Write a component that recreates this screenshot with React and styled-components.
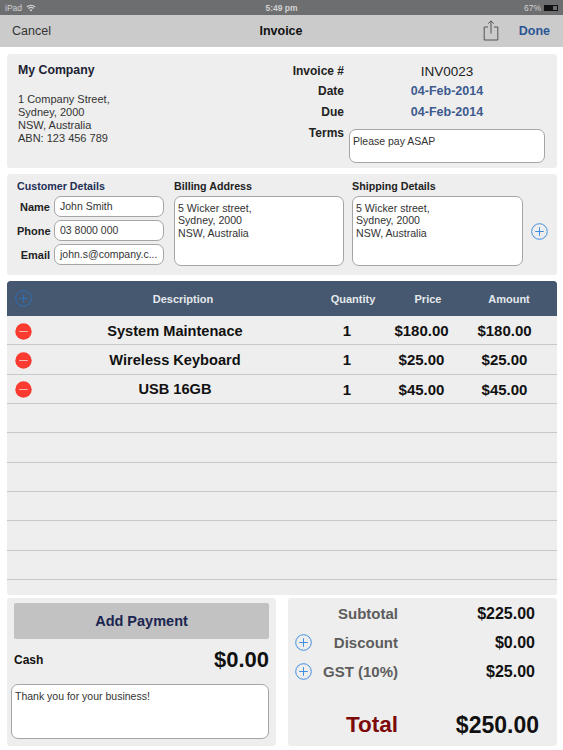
import React from 'react';
import styled, { createGlobalStyle } from 'styled-components';

const items = [
  { name: 'System Maintenace', qty: '1', price: '$180.00', amount: '$180.00' },
  { name: 'Wireless Keyboard', qty: '1', price: '$25.00', amount: '$25.00' },
  { name: 'USB 16GB', qty: '1', price: '$45.00', amount: '$45.00' },
];

function PlusIcon({ size = 17, color = '#3f8fe0' }) {
  return (
    <svg width={size} height={size} viewBox="0 0 17 17" fill="none" stroke={color} strokeWidth="1">
      <circle cx="8.5" cy="8.5" r="7.8" />
      <path d="M8.5 4.2v8.6M4.2 8.5h8.6" />
    </svg>
  );
}

function MinusIcon() {
  return (
    <MinusSvg width="17" height="17" viewBox="0 0 17 17">
      <circle cx="8.5" cy="8.5" r="8.2" fill="#fb3b30" />
      <path d="M4.2 8.5h8.6" stroke="#f8b8b4" strokeWidth="1.2" />
    </MinusSvg>
  );
}

export default function App() {
  const emptyRows = Array.from({ length: 6 });

  return (
    <Page>
      <GlobalStyle />

      <StatusBar>
        <StatusLeft>
          iPad
          <svg width="10" height="8" viewBox="0 0 10 8" fill="#d0d0d0">
            <path d="M5 7.6L3.6 6a2 2 0 0 1 2.8 0zM2.8 5.1l-.8-.9a4.4 4.4 0 0 1 6 0l-.8.9a3.2 3.2 0 0 0-4.4 0zM1.3 3.5L.4 2.6a6.8 6.8 0 0 1 9.2 0l-.9.9a5.5 5.5 0 0 0-7.4 0z" />
          </svg>
        </StatusLeft>
        <StatusCenter>5:49 pm</StatusCenter>
        <StatusRight>
          67%
          <Battery>
            <BatteryFill />
          </Battery>
        </StatusRight>
      </StatusBar>

      <NavBar>
        <NavCancel>Cancel</NavCancel>
        <NavTitle>Invoice</NavTitle>
        <NavActions>
          <ShareSvg width="16" height="21" viewBox="0 0 16 21" fill="none" stroke="#555" strokeWidth="1">
            <path d="M5 7H1.2v13h13.6V7H11" />
            <path d="M8 13.5V1M5.2 3.6L8 .9l2.8 2.7" />
          </ShareSvg>
          <NavDone>Done</NavDone>
        </NavActions>
      </NavBar>

      <Content>
        <CompanyCard>
          <CompanyInfo>
            <CompanyName>My Company</CompanyName>
            <Address>
              1 Company Street,
              <br />
              Sydney, 2000
              <br />
              NSW, Australia
              <br />
              ABN: 123 456 789
            </Address>
          </CompanyInfo>
          <InvoiceMeta>
            <MetaLabel $h={19}>Invoice #</MetaLabel>
            <InvoiceNumber>INV0023</InvoiceNumber>
            <MetaLabel $h={20}>Date</MetaLabel>
            <DateValue $h={20}>04-Feb-2014</DateValue>
            <MetaLabel $h={23}>Due</MetaLabel>
            <DateValue $h={23}>04-Feb-2014</DateValue>
            <MetaLabel $h={19}>Terms</MetaLabel>
            <TermsBox>Please pay ASAP</TermsBox>
          </InvoiceMeta>
        </CompanyCard>

        <CustomerCard>
          <CustomerColumn>
            <CustomerHeading>Customer Details</CustomerHeading>
            <FieldRow>
              <FieldLabel>Name</FieldLabel>
              <FieldInput>John Smith</FieldInput>
            </FieldRow>
            <FieldRow>
              <FieldLabel>Phone</FieldLabel>
              <FieldInput>03 8000 000</FieldInput>
            </FieldRow>
            <FieldRow>
              <FieldLabel>Email</FieldLabel>
              <FieldInput>john.s@company.c...</FieldInput>
            </FieldRow>
          </CustomerColumn>
          <AddressColumn $w={170}>
            <AddressHeading>Billing Address</AddressHeading>
            <AddressBox>
              5 Wicker street,
              <br />
              Sydney, 2000
              <br />
              NSW, Australia
            </AddressBox>
          </AddressColumn>
          <AddressColumn $w={171}>
            <AddressHeading>Shipping Details</AddressHeading>
            <AddressBox>
              5 Wicker street,
              <br />
              Sydney, 2000
              <br />
              NSW, Australia
            </AddressBox>
          </AddressColumn>
          <AddCustomer>
            <PlusIcon />
          </AddCustomer>
        </CustomerCard>

        <ItemsTable>
          <HeaderRow>
            <IconCell>
              <PlusIcon color="#2f6fb5" />
            </IconCell>
            <HeaderCell>Description</HeaderCell>
            <HeaderCell>Quantity</HeaderCell>
            <HeaderCell>Price</HeaderCell>
            <HeaderCell>Amount</HeaderCell>
          </HeaderRow>
          {items.map((item) => (
            <ItemRow key={item.name}>
              <IconCell>
                <MinusIcon />
              </IconCell>
              <ItemCell>{item.name}</ItemCell>
              <PriceCell>{item.qty}</PriceCell>
              <PriceCell>{item.price}</PriceCell>
              <PriceCell>{item.amount}</PriceCell>
            </ItemRow>
          ))}
          {emptyRows.map((_, i) => (
            <ItemRow key={i} />
          ))}
        </ItemsTable>

        <BottomRow>
          <PaymentCard>
            <AddPayment>Add Payment</AddPayment>
            <CashRow>
              <CashLabel>Cash</CashLabel>
              <CashValue>$0.00</CashValue>
            </CashRow>
            <NotesBox>Thank you for your business!</NotesBox>
          </PaymentCard>
          <TotalsCard>
            <TotalLine>
              <span />
              <TotalLabel>Subtotal</TotalLabel>
              <TotalValue>$225.00</TotalValue>
            </TotalLine>
            <TotalLine>
              <PlusIcon />
              <TotalLabel>Discount</TotalLabel>
              <TotalValue>$0.00</TotalValue>
            </TotalLine>
            <TotalLine>
              <PlusIcon />
              <TotalLabel>GST (10%)</TotalLabel>
              <TotalValue>$25.00</TotalValue>
            </TotalLine>
            <GrandTotal>
              <span />
              <GrandLabel>Total</GrandLabel>
              <GrandValue>$250.00</GrandValue>
            </GrandTotal>
          </TotalsCard>
        </BottomRow>
      </Content>
    </Page>
  );
}

const GlobalStyle = createGlobalStyle`
  html, body {
    margin: 0;
    padding: 0;
    background: #fff;
  }
  body {
    font-family: "Liberation Sans", Arial, sans-serif;
    -webkit-font-smoothing: antialiased;
  }
`;

const Page = styled.div`
  width: 563px;
  height: 750px;
  overflow: hidden;
  background: #fff;
`;

const StatusBar = styled.div`
  height: 15px;
  background: #6d6e70;
  display: grid;
  grid-template-columns: 1fr auto 1fr;
  align-items: center;
  padding: 0 5px;
  font-size: 8.5px;
  color: #d2d2d2;
`;

const StatusLeft = styled.div`
  display: flex;
  align-items: center;
  gap: 4px;
`;

const StatusCenter = styled.div`
  font-weight: bold;
`;

const StatusRight = styled.div`
  display: flex;
  align-items: center;
  justify-content: flex-end;
  gap: 3px;
`;

const Battery = styled.div`
  width: 14px;
  height: 6px;
  border: 1px solid #111;
  box-sizing: border-box;
  box-shadow: 1px 0 0 -1px #111;
`;

const BatteryFill = styled.div`
  width: 67%;
  height: 100%;
  background: #111;
`;

const NavBar = styled.div`
  height: 32px;
  background: #cbcbcb;
  display: grid;
  grid-template-columns: 1fr auto 1fr;
  align-items: center;
  padding: 0 13px 0 12px;
`;

const NavCancel = styled.div`
  font-size: 12.5px;
  color: #333;
`;

const NavTitle = styled.div`
  font-size: 12.5px;
  font-weight: bold;
  color: #111;
`;

const NavActions = styled.div`
  display: flex;
  align-items: center;
  justify-content: flex-end;
  gap: 20px;
`;

const ShareSvg = styled.svg`
  margin-bottom: 2px;
`;

const NavDone = styled.div`
  font-size: 12.5px;
  font-weight: bold;
  color: #2c5596;
`;

const Content = styled.div`
  padding: 7px 6px 0 7px;
  display: flex;
  flex-direction: column;
`;

const Card = styled.div`
  background: #eeeeee;
  border-radius: 3px;
`;

const CompanyCard = styled(Card)`
  height: 114px;
  display: flex;
  justify-content: space-between;
`;

const CompanyInfo = styled.div`
  padding: 9px 0 0 11px;
`;

const CompanyName = styled.div`
  font-size: 12.3px;
  font-weight: bold;
  line-height: 15px;
  color: #1b2233;
`;

const Address = styled.div`
  margin-top: 15px;
  font-size: 11px;
  line-height: 13px;
  color: #333;
`;

const InvoiceMeta = styled.div`
  display: grid;
  grid-template-columns: 60px 196px;
  column-gap: 5px;
  align-content: start;
  padding: 8px 12px 0 0;
`;

const MetaLabel = styled.div`
  height: ${(p) => p.$h}px;
  line-height: ${(p) => p.$h}px;
  font-size: 12px;
  font-weight: bold;
  color: #222;
  text-align: right;
  white-space: nowrap;
`;

const InvoiceNumber = styled.div`
  height: 19px;
  line-height: 19px;
  font-size: 13.5px;
  color: #222;
  text-align: center;
`;

const DateValue = styled.div`
  height: ${(p) => p.$h}px;
  line-height: ${(p) => p.$h}px;
  font-size: 12.5px;
  font-weight: bold;
  color: #3d5a8e;
  text-align: center;
`;

const Box = styled.div`
  background: #fff;
  border: 1px solid #a5a5a5;
  border-radius: 7px;
  box-sizing: border-box;
  color: #333;
`;

const TermsBox = styled(Box)`
  height: 34px;
  margin-top: 5px;
  padding: 5px 3px;
  font-size: 10.5px;
  line-height: 13px;
`;

const CustomerCard = styled(Card)`
  height: 101px;
  margin-top: 6px;
  box-sizing: border-box;
  padding: 6px 0 0 10px;
  display: flex;
`;

const CustomerColumn = styled.div`
  width: 157px;
  display: flex;
  flex-direction: column;
`;

const CustomerHeading = styled.div`
  font-size: 10.7px;
  font-weight: bold;
  line-height: 13px;
  height: 16px;
  color: #1f2e55;
`;

const FieldRow = styled.div`
  display: grid;
  grid-template-columns: 33px 110px;
  column-gap: 4px;
  align-items: center;
  height: 21px;
  margin-bottom: 3px;
`;

const FieldLabel = styled.div`
  font-size: 11px;
  font-weight: bold;
  color: #222;
  text-align: right;
`;

const FieldInput = styled(Box)`
  height: 21px;
  line-height: 19px;
  padding: 0 5px;
  font-size: 10.5px;
  white-space: nowrap;
  overflow: hidden;
`;

const AddressColumn = styled.div`
  width: ${(p) => p.$w}px;
  margin-right: 8px;
  display: flex;
  flex-direction: column;
`;

const AddressHeading = styled.div`
  font-size: 10.7px;
  font-weight: bold;
  line-height: 13px;
  height: 16px;
  color: #222;
`;

const AddressBox = styled(Box)`
  height: 70px;
  padding: 5px 3px;
  font-size: 10.6px;
  line-height: 12.3px;
`;

const AddCustomer = styled.div`
  margin-top: 43px;
  height: 17px;
`;

const ItemsTable = styled(Card)`
  margin-top: 6px;
  height: 314px;
  overflow: hidden;
`;

const HeaderRow = styled.div`
  height: 35px;
  background: #46586f;
  display: grid;
  grid-template-columns: 40px 272px 68px 82px 80px 8px;
  align-items: center;
  border-radius: 3px 3px 0 0;
`;

const HeaderCell = styled.div`
  font-size: 11px;
  font-weight: bold;
  color: #e4e8ec;
  text-align: center;
`;

const ItemRow = styled.div`
  height: 29.33px;
  box-sizing: border-box;
  padding-top: 1px;
  border-bottom: 1px solid #c8c8c8;
  display: grid;
  grid-template-columns: 40px 256px 88px 61px 105px;
  align-items: center;
`;

const IconCell = styled.div`
  display: flex;
  padding-left: 8px;
`;

const MinusSvg = styled.svg`
  margin-top: 1px;
`;

const ItemCell = styled.div`
  font-size: 14.6px;
  font-weight: bold;
  color: #111;
  text-align: center;
  white-space: nowrap;
`;

const PriceCell = styled(ItemCell)`
  font-size: 15px;
`;

const BottomRow = styled.div`
  margin-top: 3px;
  display: flex;
  justify-content: space-between;
`;

const PaymentCard = styled(Card)`
  width: 269px;
  height: 148px;
  box-sizing: border-box;
  padding: 5px 7px 0 4px;
  display: flex;
  flex-direction: column;
`;

const AddPayment = styled.div`
  margin-left: 3px;
  height: 36px;
  line-height: 36px;
  border-radius: 2px;
  background: #c2c2c2;
  color: #1a2550;
  font-size: 14.5px;
  font-weight: bold;
  text-align: center;
`;

const CashRow = styled.div`
  margin-left: 3px;
  height: 45px;
  padding-bottom: 4px;
  box-sizing: border-box;
  display: flex;
  justify-content: space-between;
  align-items: center;
`;

const CashLabel = styled.div`
  font-size: 12px;
  font-weight: bold;
  color: #111;
`;

const CashValue = styled.div`
  font-size: 22px;
  font-weight: bold;
  color: #111;
`;

const NotesBox = styled(Box)`
  height: 55px;
  padding: 5px 3px;
  font-size: 10.5px;
  line-height: 13px;
`;

const TotalsCard = styled(Card)`
  width: 269px;
  height: 148px;
  box-sizing: border-box;
  padding: 1px 0 0 7px;
`;

const TotalLine = styled.div`
  display: grid;
  grid-template-columns: 20px 83px 1fr;
  align-items: center;
  height: 29px;
`;

const TotalLabel = styled.div`
  font-size: 15px;
  font-weight: bold;
  color: #5d5d5d;
  text-align: right;
  white-space: nowrap;
`;

const TotalValue = styled.div`
  font-size: 16px;
  font-weight: bold;
  color: #111;
  text-align: right;
  padding-right: 22px;
`;

const GrandTotal = styled(TotalLine)`
  height: 34px;
  margin-top: 22px;
`;

const GrandLabel = styled.div`
  font-size: 22.5px;
  font-weight: bold;
  color: #7d0a0a;
  text-align: right;
`;

const GrandValue = styled.div`
  font-size: 23px;
  font-weight: bold;
  color: #111;
  text-align: right;
  padding-right: 18px;
`;
